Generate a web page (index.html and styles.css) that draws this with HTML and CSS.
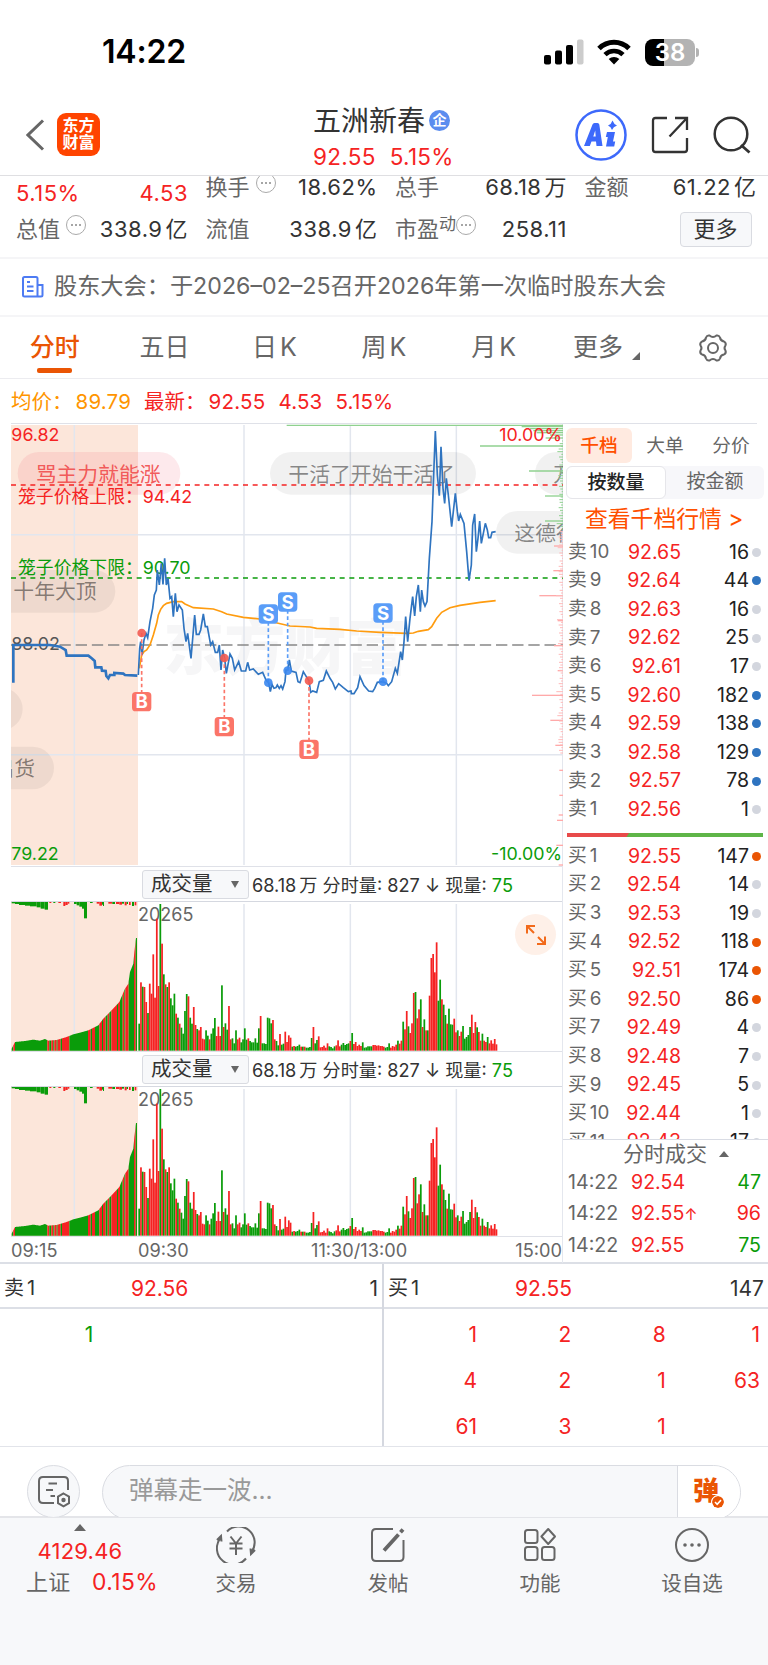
FILE: index.html
```html
<!DOCTYPE html>
<html lang="zh-CN">
<head>
    <meta charset="UTF-8">
    <meta name="viewport" content="width=device-width, initial-scale=1.0">
    <title>五洲新春 分时</title>
    <link rel="stylesheet" href="styles.css">
</head>
<body>

    <div class="status-bar">
        <span class="clock">14:22</span>
        <svg class="signal" width="40" height="26" viewBox="0 0 40 26">
            <rect x="0" y="16" width="7" height="9.500" rx="2"/>
            <rect x="11" y="11.500" width="7" height="14" rx="2"/>
            <rect x="22" y="6" width="7" height="19.500" rx="2"/>
            <rect x="33" y="0.500" width="6.500" height="25" rx="2" fill="#ccc"/>
        </svg>
        <svg class="wifi" width="36" height="26" viewBox="0 0 36 26">
            <path d="M3 9.500C11.500 1.200 24.500 1.200 33 9.500" fill="none" stroke="#000" stroke-width="5"/>
            <path d="M9 15.600C14 10.700 22 10.700 27 15.600" fill="none" stroke="#000" stroke-width="4.600"/>
            <path d="M18 25.500l-5.300-5.600c3-2.700 7.600-2.700 10.600 0z"/>
        </svg>
        <span class="battery">38</span>
        <span class="battery-tip"></span>
    </div>

    <header class="top-bar">
        <svg class="back" width="20" height="32" viewBox="0 0 20 32">
            <path d="M17 1.500L2 16l15 14.500" fill="none" stroke="#666" stroke-width="3"/>
        </svg>
        <div class="logo">东方<br>财富</div>
        <div class="title">
            <div class="name">五洲新春<span class="tag">企</span></div>
            <div class="quote"><span>92.55</span><span>5.15%</span></div>
        </div>
        <svg class="ai" width="52" height="52" viewBox="0 0 52 52">
            <circle cx="26" cy="26" r="24.500" fill="none" stroke="#3d69fb" stroke-width="2.500"/>
            <path d="M9 37L17.500 15.500Q18 14 19.500 14H22.500Q24 14 24.300 15.500L27.500 37H21.500L21 32.500H16.500L14.800 37ZM18.300 27.500H20.700L20.200 21.500Z" fill="#3d69fb" fill-rule="evenodd"/>
            <path d="M32 23h8l-2 9.500h2.200l-1 5h-8.200l1.800-9.500h-2z" fill="#3d69fb"/>
            <path d="M37.500 11.500q1.200 3.500 4.500 5q-3.800 1.200-5 4.500q-1-3.500-4-4.500q3.500-1.500 4.500-5z" fill="#3d69fb"/>
        </svg>
        <svg class="share" width="38" height="38" viewBox="0 0 38 38">
            <path d="M16 2H4.500Q2 2 2 4.500V33.500Q2 36 4.500 36H33.500Q36 36 36 33.500V22M18.500 20.500L35.500 2.500M24 2H36V14" fill="none" stroke="#333" stroke-width="2.300"/>
        </svg>
        <svg class="search" width="38" height="38" viewBox="0 0 38 38">
            <circle cx="18" cy="18" r="16.300" fill="none" stroke="#333" stroke-width="2.500"/>
            <path d="M28 29l8.500 7.500" stroke="#333" stroke-width="2.800"/>
        </svg>
    </header>

    <section class="stats">
        <div class="cell up low"><span>5.15%</span><span>4.53</span></div>
        <div class="cell"><label>换手<i class="hint"></i></label><b>18.62%</b></div>
        <div class="cell"><label>总手</label><b>68.18<s></s>万</b></div>
        <div class="cell"><label>金额</label><b>61.22<s></s>亿</b></div>
        <div class="cell"><label>总值<i class="hint"></i></label><b>338.9<s></s>亿</b></div>
        <div class="cell"><label>流值</label><b>338.9<s></s>亿</b></div>
        <div class="cell"><label>市盈<sup>动</sup><i class="hint near"></i></label><b>258.11</b></div>
        <div class="cell"><button class="more">更多</button></div>
    </section>

    <section class="notice">
        <svg width="22" height="22" viewBox="0 0 22 22" fill="none" stroke="#4d7bf3" stroke-width="2">
            <path d="M15.500 20.500H2.500Q1 20.500 1 19V2.500Q1 1 2.500 1H14Q15.500 1 15.500 2.500V20.500H19Q20.500 20.500 20.500 19V9H15.500M5 6h3M5 10.500h6.500M5 15h6.500"/>
        </svg>
        <span>股东大会：于2026–02–25召开2026年第一次临时股东大会</span>
    </section>

    <nav class="tabs">
        <a class="active">分时</a>
        <a>五日</a>
        <a>日<s></s>K</a>
        <a>周<s></s>K</a>
        <a>月<s></s>K</a>
        <a class="drop">更多</a>
        <a>
            <svg width="30" height="30" viewBox="0 0 30 30" fill="none" stroke="#666" stroke-width="2">
                <path d="M11.500 2.500Q15 5.500 18.500 2.500Q21 2 22 4.500Q22.500 8 26 8.500Q28.500 10 27.500 12.500Q25.500 15 27.500 17.500Q28.500 20 26 21.500Q22.500 22 22 25.500Q21 28 18.500 27.500Q15 24.500 11.500 27.500Q9 28 8 25.500Q7.500 22 4 21.500Q1.500 20 2.500 17.500Q4.500 15 2.500 12.500Q1.500 10 4 8.500Q7.500 8 8 4.500Q9 2 11.500 2.500Z"/>
                <circle cx="15" cy="15" r="5"/>
            </svg>
        </a>
    </nav>

    <div class="summary">
        <span class="avg">均价：</span><span class="avg num">89.79</span>
        <span class="up">最新：</span><span class="up num">92.55</span><span class="up num">4.53</span><span class="up num">5.15%</span>
    </div>

    <main class="board">
        <div class="charts">
            <svg class="price" width="552" height="442" viewBox="33 27 1656 1326">
                <rect x="33" y="30" width="381" height="1320" fill="#fce6da"/>
                <g class="mark"><text x="490" y="765">东方财富</text></g>
                <path class="grid" d="M223 30V1350M732 30V1350M1051 30V1350M1369 30V1350M33 359H1689M33 1019H1689"/>

                <g class="bubbles">
                    <rect x="53" y="111" width="488" height="128" rx="64" fill="#f04864" fill-opacity=".12"/>
                    <rect x="810" y="111" width="618" height="128" rx="64"/>
                    <rect x="1605" y="111" width="300" height="128" rx="64"/>
                    <rect x="1488" y="288" width="300" height="128" rx="64"/>
                    <rect x="-100" y="465" width="446" height="128" rx="64"/>
                    <rect x="-100" y="818" width="168" height="128" rx="64"/>
                    <rect x="-100" y="995" width="262" height="128" rx="64"/>
                    <text x="107" y="200" fill="#f04a4a">骂主力就能涨</text>
                    <text x="865" y="200">干活了开始干活了</text>
                    <text x="1660" y="200">万</text>
                    <text x="1543" y="377">这德行</text>
                    <text x="40" y="553">十年大顶</text>
                    <text x="-20" y="1083">出货</text>
                </g>

                <path d="M33 210H1689" stroke="#f52323" stroke-width="5" stroke-dasharray="15 14"/>
                <path d="M33 489H1689" stroke="#0a9c0a" stroke-width="5" stroke-dasharray="15 14"/>
                <path d="M33 690H1689" stroke="#888" stroke-width="4.500" stroke-dasharray="34 14.500"/>

                <g id="depth"></g>

                <g class="labels">
                    <text x="34" y="78" class="red">96.82</text>
                    <text x="54" y="264" class="red">笼子价格上限：<tspan x="428">94.42</tspan></text>
                    <text x="54" y="478" class="green">笼子价格下限：<tspan x="428">90.70</tspan></text>
                    <text x="34" y="706" fill="#555">88.02</text>
                    <text x="34" y="1335" class="green">79.22</text>
                    <text x="1686" y="78" class="red" text-anchor="end">10.00%</text>
                    <text x="1686" y="1335" class="green" text-anchor="end">-10.00%</text>
                </g>

                <polyline class="avg-line" points="418,760 425,720 432,710 440,705 450,690 460,660 470,625 475,600 482,583 490,572 500,565 520,560 545,560 555,567 580,578 640,582 665,590 680,597 730,607 780,612 870,633 930,636 950,640 1020,643 1070,648 1140,652 1220,655 1240,654 1255,649 1285,644 1295,635 1310,610 1325,592 1350,578 1380,571 1440,562 1487,557"/>
                <polyline class="pre-line" points="40,803 40,690 150,690 180,695 197,705 200,722 265,722 275,730 284,738 286,757 304,757 306,767 317,768 319,783 325,790 330,780 343,780 343,774 370,776 375,780 412,782"/>
                <polyline class="price-line" points="415,780 419,700 422,680 426,720 432,675 438,655 443,668 450,620 458,580 463,540 469,525 472,465 478,510 484,445 489,508 494,430 499,510 504,490 510,550 515,545 520,605 526,535 531,590 537,570 547,585 552,640 558,680 563,655 573,730 584,600 589,658 597,658 602,645 610,597 616,635 622,635 632,690 638,680 646,712 653,712 658,690 663,765 668,705 674,730 679,775 690,717 697,730 704,765 716,740 724,768 737,768 743,742 749,765 760,762 775,778 788,772 798,795 806,803 811,830 816,808 822,820 828,818 832,810 838,820 843,812 848,822 855,800 858,765 863,765 868,735 874,768 888,772 894,800 900,803 910,770 922,790 927,797 932,832 938,828 950,832 958,800 970,796 979,768 990,790 998,802 1006,822 1016,806 1030,818 1045,830 1053,828 1054,836 1062,836 1073,818 1080,785 1092,812 1106,828 1118,830 1124,820 1132,802 1149,800 1160,805 1165,812 1175,800 1186,760 1192,775 1202,710 1207,735 1212,680 1217,605 1223,680 1230,610 1238,545 1244,603 1249,545 1255,510 1261,590 1265,525 1270,560 1275,573 1281,560 1288,430 1296,320 1301,180 1306,48 1312,180 1318,242 1323,95 1329,220 1334,265 1339,190 1345,240 1355,335 1366,235 1372,290 1376,318 1381,298 1392,325 1400,410 1407,497 1414,450 1418,330 1424,297 1429,410 1434,370 1439,318 1444,385 1450,355 1456,325 1462,345 1466,368 1472,368 1476,352 1487,350"/>

                <g id="trades"></g>
            </svg>

            <div class="vol-head">
                <span class="select">成交量</span>
                <span class="vol-info">68.18<s></s>万 分时量: 827 ↓ 现量: <em>75</em></span>
            </div>
            <svg class="volume" width="552" height="149" viewBox="33 125 1656 447"></svg>

            <div class="vol-head">
                <span class="select">成交量</span>
                <span class="vol-info">68.18<s></s>万 分时量: 827 ↓ 现量: <em>75</em></span>
            </div>
            <svg class="volume" width="552" height="149" viewBox="33 125 1656 447"></svg>

            <div class="axis">
                <span>09:15</span><span>09:30</span><span>11:30/13:00</span><span>15:00</span>
            </div>

            <div class="expand">
                <svg width="22" height="22" viewBox="0 0 22 22" fill="none" stroke="#f26a1b" stroke-width="2">
                    <path d="M2 9.500V2h8M2 2l7 7M20 12.500V20h-8M20 20l-7-7"/>
                </svg>
            </div>
        </div>

        <aside class="side">
            <div class="side-tabs"><span class="on">千档</span><span>大单</span><span>分价</span></div>
            <div class="segment"><span class="on">按数量</span><span>按金额</span></div>
            <div class="link">查看千档行情 &gt;</div>
            <div class="book" id="sell"></div>
            <div class="ratio"><span></span></div>
            <div class="book buy" id="buy"></div>
            <div class="deal-title">分时成交<i></i></div>
            <div class="deals">
                <div><span>14:22</span><span class="p">92.54</span><span class="green">47</span></div>
                <div><span>14:22</span><span class="p">92.55<small>↑</small></span><span class="red">96</span></div>
                <div><span>14:22</span><span class="p">92.55</span><span class="green">75</span></div>
            </div>
        </aside>
    </main>

    <section class="queue">
        <div class="half">
            <div class="queue-head"><span>卖<s></s>1</span><span class="up">92.56</span><span>1</span></div>
            <div class="queue-grid sell"><span>1</span></div>
        </div>
        <div class="half">
            <div class="queue-head"><span>买<s></s>1</span><span class="up">92.55</span><span>147</span></div>
            <div class="queue-grid">
                <span>1</span><span>2</span><span>8</span><span>1</span>
                <span>4</span><span>2</span><span>1</span><span>63</span>
                <span>61</span><span>3</span><span>1</span>
            </div>
        </div>
    </section>

    <div class="comment">
        <div class="round">
            <svg width="36" height="34" viewBox="0 0 36 34" fill="none" stroke="#666" stroke-width="2">
                <path d="M17 28H6Q2 28 2 24V6Q2 2 6 2H27Q31 2 31 6V15M11.500 8.500H20M9 15H16M13.500 21H18"/>
                <path d="M26.500 18.500l5.500 3.200v6.500l-5.500 3.200l-5.500-3.200v-6.500z"/>
                <circle cx="26.500" cy="25" r="1.200" fill="#666"/>
            </svg>
        </div>
        <div class="input">
            <span class="placeholder">弹幕走一波...</span>
            <span class="danmu">弹<svg width="14" height="14" viewBox="0 0 14 14"><circle cx="7" cy="7" r="7" fill="#ea5504"/><path d="M3.500 7l2.500 2.700L10.500 4.800" fill="none" stroke="#fff" stroke-width="1.800"/></svg></span>
        </div>
    </div>

    <footer class="bottom-nav">
        <div class="index">
            <i></i>
            <div class="up">4129.46</div>
            <div><span>上证</span><span class="up">0.15%</span></div>
        </div>
        <div class="item">
            <svg width="40" height="36" viewBox="0 0 40 36" fill="none" stroke="#666" stroke-width="2">
                <path d="M11 4.500A16 16 0 0 1 35.500 25M39 23L35 27L34.500 21.500M30 31.500A16 16 0 0 1 4.500 11M1 13L5 9L5.500 14.500M14.500 9.500l5.500 7l5.500-7M13.500 16.500h13M13.500 21.500h13M20 16.500V28"/>
            </svg>
            <span>交易</span>
        </div>
        <div class="item">
            <svg width="36" height="36" viewBox="0 0 36 36" fill="none" stroke="#666" stroke-width="2">
                <path d="M23 2H6Q2 2 2 6V30Q2 34 6 34H29.500Q33.500 34 33.500 30V13"/>
                <path d="M14 23.500L28.500 7.500M30.500 5.300L33 2.500" stroke-width="3.800"/>
            </svg>
            <span>发帖</span>
        </div>
        <div class="item">
            <svg width="36" height="36" viewBox="0 0 36 36" fill="none" stroke="#666" stroke-width="2">
                <rect x="3" y="3" width="12.500" height="13" rx="2.500"/>
                <rect x="3" y="20" width="12.500" height="13" rx="2.500"/>
                <rect x="20" y="20" width="12.500" height="13" rx="2.500"/>
                <path d="M26.200 2L33 9.500L26.200 17L19.400 9.500Z" stroke-linejoin="round"/>
            </svg>
            <span>功能</span>
        </div>
        <div class="item">
            <svg width="36" height="36" viewBox="0 0 36 36">
                <circle cx="18" cy="18" r="16" fill="none" stroke="#666" stroke-width="2"/>
                <circle cx="11" cy="18" r="1.800" fill="#666"/><circle cx="18" cy="18" r="1.800" fill="#666"/><circle cx="25" cy="18" r="1.800" fill="#666"/>
            </svg>
            <span>设自选</span>
        </div>
    </footer>

    <script src="script.js"></script>
</body>
</html>
```

FILE: styles.css
```css
* {
    margin: 0;
    padding: 0;
    box-sizing: border-box;
}

body {
    width: 768px;
    height: 1665px;
    overflow: hidden;
    background: #fff;
    color: #333;
    font-family: "Inter", "Noto Sans CJK SC", sans-serif;
    font-size: 20px;
    line-height: 1;
}

/* thin gap between digits and a chinese unit */
s {
    display: inline-block;
    width: 3px;
}

i, em {
    font-style: normal;
}

.up, .red {
    color: #f52323;
    fill: #f52323;
}

.green {
    color: #0a9c0a;
    fill: #0a9c0a;
}

/* status bar */
.status-bar {
    display: flex;
    align-items: center;
    height: 88px;
    padding: 16px 69px 0 102px;
}

.clock {
    margin-right: auto;
    color: #000;
    font-size: 32px;
    font-weight: 600;
    letter-spacing: -0.2px;
}

.wifi {
    margin: 0 13px 0 12px;
}

.battery {
    width: 50px;
    height: 27px;
    border-radius: 8px;
    background: linear-gradient(90deg, #000 38%, #b3b3b3 38%);
    color: #fff;
    font-size: 24px;
    font-weight: 600;
    line-height: 27px;
    text-align: center;
}

.battery-tip {
    width: 3px;
    height: 9px;
    margin-left: 1px;
    border-radius: 0 4px 4px 0;
    background: #b3b3b3;
}

/* header */
.top-bar {
    display: flex;
    align-items: center;
    height: 88px;
    padding: 6px 17px 0 26px;
    border-bottom: 1px solid #dfdfe2;
}

.logo {
    width: 43px;
    height: 43px;
    margin-left: 11px;
    padding-top: 4px;
    border-radius: 9px;
    background: #ff4400;
    color: #fff;
    font-size: 16px;
    font-weight: 700;
    line-height: 17px;
    text-align: center;
}

.title {
    width: 140px;
    margin: 3px auto 0 213px;
}

.name {
    display: flex;
    align-items: center;
    height: 34px;
    font-size: 28px;
    white-space: nowrap;
}

.tag {
    width: 21px;
    height: 21px;
    margin-left: 4px;
    border-radius: 50%;
    background: #5b8def;
    color: #fff;
    font-size: 14px;
    font-weight: 700;
    line-height: 20px;
    text-align: center;
}

.quote {
    display: flex;
    gap: 14px;
    padding-top: 8px;
    color: #f52323;
    font-size: 22.500px;
    letter-spacing: 0.3px;
}

.ai {
    margin-right: 24px;
}

.share {
    margin-right: 24px;
}

/* stats */
.stats {
    display: grid;
    grid-template-columns: repeat(4, 172px);
    grid-template-rows: 42px 42px;
    column-gap: 17.500px;
    height: 84px;
    padding: 0 0 0 16px;
    margin-top: -1px;
    border-bottom: 2px solid #f5f5f7;
    border-top: 1px solid #dfdfe2;
    overflow: hidden;
    font-size: 22px;
}

.cell {
    display: flex;
    align-items: center;
    justify-content: space-between;
    height: 22px;
    white-space: nowrap;
}

.cell.low {
    padding-top: 11px;
    letter-spacing: 0.5px;
}

.cell label {
    display: flex;
    align-items: center;
    color: #666;
}

.cell b {
    font-weight: 400;
    letter-spacing: 0.5px;
}

.hint {
    display: flex;
    align-items: center;
    justify-content: center;
    width: 20px;
    height: 20px;
    margin: -9px 0 0 6px;
    border: 1.500px solid #aaa;
    border-radius: 50%;
}

.hint::after {
    content: "";
    width: 2px;
    height: 2px;
    border-radius: 50%;
    background: #888;
    box-shadow: -4px 0 #888, 4px 0 #888;
}

.hint.near {
    margin-left: 0;
}

.cell sup {
    margin-top: -9px;
    font-size: 17px;
}

.cell:nth-child(n+5) {
    align-self: start;
}

.more {
    width: 72px;
    height: 35px;
    margin: 0 0 0 auto;
    border: 1px solid #d9dbe1;
    border-radius: 4px;
    background: #f7f8fa;
    color: #333;
    font-family: inherit;
    font-size: 22px;
    line-height: 32px;
}

.cell:last-child {
    width: 167px;
    padding-top: 0;
}

/* notice */
.notice {
    display: flex;
    align-items: center;
    gap: 10px;
    height: 58px;
    padding-left: 22px;
    border-bottom: 2px solid #f5f5f7;
    color: #666;
    font-size: 23.200px;
    white-space: nowrap;
}

/* tabs */
.tabs {
    display: grid;
    grid-template-columns: repeat(7, 1fr);
    height: 62px;
    border-bottom: 1px solid #ececf0;
    color: #666;
    font-size: 25px;
}

.tabs a {
    display: flex;
    position: relative;
    align-items: center;
    justify-content: center;
}

.tabs .active {
    color: #ea5504;
    font-weight: 500;
}

.tabs .active::after {
    content: "";
    position: absolute;
    bottom: 5px;
    width: 35px;
    height: 5px;
    border-radius: 2px;
    background: #ea5504;
}

.tabs .drop {
    padding-right: 11px;
}

.tabs .drop::after {
    content: "";
    position: absolute;
    right: 18px;
    bottom: 18px;
    border-left: 8px solid transparent;
    border-bottom: 8px solid #666;
}

.summary {
    display: flex;
    align-items: center;
    height: 44px;
    padding-left: 11px;
    padding-top: 2px;
    font-size: 20.500px;
}

.summary .num {
    margin: 0 13px 0 3px;
    font-size: 20.500px;
    letter-spacing: 0.2px;
}

.summary .num + .num {
    margin-left: 0;
}

.avg {
    color: #ff9500;
}

/* main board */
.board {
    display: grid;
    grid-template-columns: 552px 205px;
    height: 841px;
    padding-left: 11px;
    border-bottom: 2px solid #dcdfe6;
}

.charts {
    position: relative;
    border-top: 1px solid #dfe1e8;
    border-right: 1px solid #e4e7ee;
}

.charts svg {
    display: block;
}

.grid {
    fill: none;
    stroke: #e2e6ee;
    stroke-width: 4.500px;
}

.mark {
    fill: #f6f6f7;
    font-size: 183px;
    font-weight: 900;
}

.bubbles {
    fill: #000;
    font-size: 62.500px;
}

.bubbles rect {
    fill-opacity: 0.055;
}

.bubbles rect:first-child {
    fill-opacity: 0.12;
}

.bubbles text {
    fill-opacity: 0.45;
}

.bubbles text:first-of-type {
    fill-opacity: 0.9;
}

.labels {
    font-size: 53.500px;
}

.avg-line, .pre-line, .price-line {
    fill: none;
    stroke: #ff9c0f;
    stroke-width: 5px;
}

.price-line {
    stroke: #2f74c0;
    stroke-width: 5px;
}

.pre-line {
    stroke: #2f74c0;
    stroke-width: 8px;
}

.trade-text {
    fill: #fff;
    font-size: 56px;
    font-weight: 700;
    text-anchor: middle;
}

.vol-head {
    display: flex;
    align-items: center;
    height: 36px;
    padding-left: 131px;
    border-top: 1px solid #dfe1e8;
    border-bottom: 1px solid #d5d8e0;
    font-size: 18.150px;
    white-space: nowrap;
}

.select {
    display: flex;
    align-items: center;
    justify-content: space-between;
    width: 107px;
    height: 29px;
    margin-right: 3px;
    padding: 1px 9px 0 8px;
    border: 1px solid #d9dbe1;
    border-radius: 3px;
    background: #f7f8fa;
    font-size: 20.500px;
}

.select::after {
    content: "";
    border: 4.500px solid transparent;
    border-top: 7px solid #666;
    border-bottom: 0;
}

.vol-info {
    padding-top: 2px;
}

.vol-info em {
    color: #0a9c0a;
}

.volume-label {
    fill: #666;
    font-size: 54px;
}

.axis {
    display: grid;
    grid-template-columns: 127px 173px 1fr auto;
    align-items: center;
    height: 27px;
    border-top: 1px solid #dfe1e8;
    color: #666;
    font-size: 18.200px;
}

.expand {
    display: flex;
    position: absolute;
    top: 490px;
    right: 6px;
    align-items: center;
    justify-content: center;
    width: 41px;
    height: 41px;
    border-radius: 50%;
    background: #fef0e8;
}

/* right column */
.side {
    display: flex;
    flex-direction: column;
    min-width: 0;
}

.side-tabs {
    display: flex;
    width: 194px;
    height: 43px;
    padding: 4px 0 3px 3px;
    border-top: 1px solid #dfe1e8;
    color: #666;
    font-size: 18.700px;
}

.side-tabs span {
    flex: 0 0 66px;
    border-radius: 6px;
    line-height: 36px;
    text-align: center;
}

.side-tabs .on {
    background: #ffeae0;
    color: #ff5000;
    font-weight: 500;
}

.segment {
    display: flex;
    width: 198px;
    height: 33px;
    margin-left: 3px;
    border-radius: 6px;
    background: #f7f7fa;
    color: #666;
    font-size: 19px;
    line-height: 32px;
    text-align: center;
}

.segment span {
    flex: 1;
}

.segment .on {
    border: 1px solid #e6e6ea;
    border-radius: 6px;
    background: #fff;
    color: #222;
    font-weight: 500;
}

.link {
    height: 39px;
    padding-left: 22px;
    color: #ff5000;
    font-size: 22.800px;
    line-height: 40px;
    white-space: nowrap;
}

.book {
    flex: 0 0 295px;
}

.book.buy {
    flex-basis: 297px;
    overflow: hidden;
}

.book .row {
    display: grid;
    grid-template-columns: 56px 57px 1fr 9px;
    align-items: center;
    height: 28.600px;
    padding: 0 7px 0 5px;
    color: #666;
    font-size: 19.500px;
}

.book .row span:first-child {
    font-size: 18.800px;
}

.book .row span:nth-child(2) {
    color: #f52323;
    text-align: right;
}

.book .row span:nth-child(3) {
    padding-right: 3px;
    color: #222;
    text-align: right;
}

.dot {
    width: 9px;
    height: 9px;
    border-radius: 50%;
    background: #d3d6de;
}

.dot.blue {
    background: #2f74c0;
}

.dot.orange {
    background: #ea5504;
}

.ratio {
    height: 4px;
    margin: 0 5px 5px 4px;
    background: #5fb548;
}

.ratio span {
    display: block;
    width: 62px;
    height: 4px;
    background: #e84a4a;
    clip-path: polygon(0 0, 100% 0, 96% 100%, 0 100%);
}

.deal-title {
    display: flex;
    align-items: center;
    gap: 12px;
    height: 28px;
    padding-left: 60px;
    border-top: 1px solid #d9dce4;
    color: #666;
    font-size: 21px;
}

.deal-title i {
    border: 5px solid transparent;
    border-bottom: 6px solid #666;
    border-top: 0;
}

.deals div {
    display: grid;
    grid-template-columns: 63px 1fr auto;
    align-items: center;
    height: 31.500px;
    padding: 0 7px 0 5px;
    color: #666;
    font-size: 19.600px;
}

.deals .p {
    color: #f52323;
}

.deals small {
    font-size: 16px;
}

/* order queue */
.queue {
    display: flex;
    height: 183px;
    border-bottom: 1px solid #e2e4ea;
}

.half {
    width: 384px;
}

.half:first-child {
    border-right: 2px solid #d5d8e0;
}

.queue-head {
    display: grid;
    grid-template-columns: 127px 1fr auto;
    align-items: center;
    height: 45px;
    padding: 5px 4px 0;
    border-bottom: 2px solid #dcdfe6;
    font-size: 21px;
}

.queue-head span:first-child {
    font-size: 20px;
}

.queue-grid {
    display: grid;
    grid-template-columns: repeat(4, 94.300px);
    grid-auto-rows: 46.300px;
    align-items: center;
    justify-content: end;
    padding: 2px 8px 0 0;
    color: #f52323;
    font-size: 21px;
    text-align: right;
}

.queue-grid.sell {
    justify-content: start;
    margin-left: -1px;
    color: #0a9c0a;
}

/* comment bar */
.comment {
    display: flex;
    gap: 22px;
    height: 70px;
    padding: 18px 27px 0;
    overflow: hidden;
}

.round {
    display: flex;
    flex: 0 0 53px;
    align-items: center;
    justify-content: center;
    height: 53px;
    padding-left: 2px;
    border: 1px solid #dadce2;
    border-radius: 50%;
    background: #f7f8fa;
}

.input {
    display: flex;
    flex: 1;
    height: 55px;
    border: 1px solid #dadce2;
    border-radius: 28px;
    background: #f7f8fa;
    overflow: hidden;
}

.placeholder {
    flex: 1;
    padding-left: 26px;
    color: #999;
    font-size: 24.500px;
    line-height: 49px;
}

.danmu {
    display: flex;
    width: 63px;
    padding: 12px 0 0 15px;
    border-left: 1px solid #dadce2;
    background: #fff;
    color: #ea5504;
    font-size: 26px;
    font-weight: 900;
}

.danmu svg {
    flex: none;
    margin: 17px 0 0 -8px;
    border: 1px solid #fff;
    border-radius: 50%;
    background: #fff;
}

/* bottom nav */
.bottom-nav {
    display: grid;
    grid-template-columns: 160px repeat(4, 152px);
    height: 149px;
    margin-top: -1px;
    border-top: 2px solid #e4e5e9;
    background: #f7f8fa;
    color: #666;
}

.index {
    padding-top: 6px;
    font-size: 22px;
    text-align: center;
    letter-spacing: 0.2px;
}

.index i {
    display: block;
    width: 0;
    margin: 0 auto 9px;
    border: 6px solid transparent;
    border-top: 0;
    border-bottom: 7px solid #666;
}

.index div:last-child {
    display: flex;
    justify-content: space-between;
    padding: 9px 2px 0 26px;
}

.index div:last-child .up {
    font-size: 22.800px;
    letter-spacing: 0.4px;
}

.item {
    display: flex;
    flex-direction: column;
    align-items: center;
    gap: 11px;
    padding-top: 9px;
    font-size: 20.500px;
}
```

FILE: script.js
```js
const NS = "http://www.w3.org/2000/svg";
const RED = "#f52323";
const GREEN = "#0a9c0a";

function add(parent, name, attrs, text) {
    const el = document.createElementNS(NS, name);
    for (const key in attrs) el.setAttribute(key, attrs[key]);
    if (text) el.textContent = text;
    parent.appendChild(el);
}

// Volume per minute: colour + top of the bar, base line is 571
const minutes = ("g490 r366 g379 r380 r425 g458 r370 r400 r282 r412 r175 r377 g131 r250 g342 r372 g380 r366 g414 g435 " +
    "g400 r460 g472 r490 g502 g520 g452 g401 r408 g472 g490 r440 r494 g506 r510 r500 r535 r537 g510 g526 " +
    "r537 g520 g504 g473 r527 r499 r527 g375 r500 g489 g508 r437 r537 g534 g549 g510 r537 r532 g546 g537 " +
    "g504 g538 r534 g542 g546 g546 g534 g547 g504 r467 g549 g549 g551 g472 g474 g489 r479 r537 g542 g555 " +
    "r521 g553 g550 r514 r545 r525 r532 g559 r557 g559 g557 g553 r559 g559 r559 g562 g562 g560 g533 r500 " +
    "g549 g539 r528 r561 r560 r556 r562 r549 g558 g560 g564 g558 r555 r540 r558 g553 g548 g554 g551 g549 " +
    "r542 g518 r551 r545 r557 r553 r557 g546 g562 g561 g558 g558 g558 r554 r554 r556 r555 r557 r557 r559 " +
    "g562 g560 g549 r562 r557 r559 r553 g541 r550 r541 g484 r507 r452 g498 r518 r489 r398 g395 r474 r447 " +
    "g417 r500 g477 r510 g510 r406 r293 r281 r336 r246 g421 g358 r417 g433 g464 r490 g445 g492 g493 r475 " +
    "r516 g510 r527 r514 g497 g535 g530 g524 g500 r463 r518 r485 g501 r515 r541 g520 r541 r545 g530 r549 " +
    "r540 r550 r536 r552").split(" ");

// Call auction: outline of the bars and the colour runs under it
const outline = [[35, 565], [45, 545], [75, 542], [100, 538], [120, 541], [135, 536], [145, 541], [170, 539], [200, 530],
    [220, 522], [240, 517], [265, 510], [295, 495], [310, 475], [330, 455], [358, 425], [375, 385], [385, 370],
    [390, 335], [400, 310], [403, 275], [408, 233], [413, 233]];
const runs = [[35, "g"], [40, "r"], [45, "g"], [142, "r"], [148, "g"], [154, "r"], [160, "g"], [163, "r"], [170, "g"],
    [173, "r"], [182, "g"], [186, "r"], [208, "g"], [264, "r"], [272, "g"], [276, "r"], [285, "g"], [298, "r"],
    [306, "g"], [309, "r"], [317, "g"], [323, "r"], [328, "g"], [334, "r"], [351, "g"], [354, "r"], [360, "g"],
    [368, "r"], [373, "g"], [376, "r"], [386, "g"], [402, "r"], [407, "g"]];
// Unmatched volume hanging from the top: x, width, height, colour
const hanging = [[35, 10, 4, "g"], [45, 12, 6, "g"], [57, 18, 9, "g"], [75, 15, 11, "g"], [90, 20, 13, "g"],
    [110, 12, 16, "g"], [122, 12, 20, "g"], [134, 10, 23, "g"], [148, 6, 3, "r"], [160, 6, 3, "g"], [175, 8, 3, "r"],
    [190, 6, 12, "r"], [196, 7, 9, "r"], [203, 5, 5, "r"], [222, 8, 6, "g"], [230, 8, 10, "g"], [238, 8, 14, "g"],
    [246, 6, 20, "g"], [252, 9, 49, "g"], [270, 8, 3, "g"], [290, 8, 5, "r"], [298, 8, 11, "r"], [306, 5, 8, "g"],
    [309, 3, 12, "g"], [325, 12, 5, "r"], [337, 8, 6, "g"], [348, 10, 6, "r"], [358, 8, 8, "r"], [366, 6, 5, "g"],
    [374, 6, 10, "r"], [380, 4, 6, "g"], [387, 5, 9, "r"], [396, 6, 12, "g"], [404, 5, 10, "r"]];

function colour(c) {
    return c === "r" ? RED : GREEN;
}

function outlineTop(x) {
    let i = 1;
    while (i < outline.length - 1 && outline[i][0] < x) i++;
    const [x0, y0] = outline[i - 1];
    const [x1, y1] = outline[i];
    return y0 + (y1 - y0) * (x - x0) / (x1 - x0);
}

document.querySelectorAll(".volume").forEach(svg => {
    add(svg, "rect", { x: 33, y: 125, width: 381, height: 447, fill: "#fce6da" });
    add(svg, "path", { d: "M223 131V572M732 131V572M1051 131V572M1369 131V572", class: "grid" });
    add(svg, "text", { x: 414, y: 183, class: "volume-label" }, "20265");

    runs.forEach(([start, c], i) => {
        const end = i + 1 < runs.length ? runs[i + 1][0] : 411;
        let d = `M${start} 571`;
        for (let x = start; x <= end; x++) d += `L${x} ${outlineTop(x).toFixed(1)}`;
        add(svg, "path", { d: `${d}L${end} 571Z`, fill: colour(c) });
    });
    hanging.forEach(([x, width, height, c]) => add(svg, "rect", { x, y: 125, width, height, fill: colour(c) }));
    minutes.forEach((m, i) => {
        const top = Number(m.slice(1));
        add(svg, "rect", { x: (415 + i * 5.28).toFixed(1), y: top, width: 5.2, height: 571 - top, fill: colour(m[0]) });
    });
});

// Order depth on the right edge of the price chart: y, left end
const depth = document.getElementById("depth");
[[31, 860], [35, 1565], [41, 1590], [47, 1600], [53, 1610], [60, 1650], [69, 1637], [93, 1440], [168, 1587], [243, 1635],
    [318, 1635], [393, 1662], [467, 1660], [542, 1618], [617, 1673], [692, 1662], [767, 1673], [841, 1596], [916, 1651],
    [991, 1666], [1066, 1678], [1141, 1678], [1200, 1676], [1216, 1671], [1291, 1669], [1350, 1676]].forEach(([y, x]) => {
    add(depth, "path", { d: `M${x} ${y}H1689`, stroke: y < 350 ? "#8fd18f" : "#ffa9a9", "stroke-width": 4 });
});
for (let i = 0; i < 118; i++) {
    const y = 78 + i * 8;
    const w = 3 + (i * 7 % 11) + (i % 9 === 4 ? 8 : 0);
    add(depth, "path", { d: `M${1689 - w} ${y}H1689`, stroke: y < 350 ? "#8fd18f" : "#ffb9b9", "stroke-width": 3 });
}

// Own trades: letter, x, y of the dot, y of the badge
const trades = document.getElementById("trades");
[["B", 425, 654, 860], ["B", 673, 729, 935], ["S", 805, 803, 597], ["S", 863, 767, 561], ["B", 927, 797, 1003],
    ["S", 1149, 800, 594]].forEach(([type, x, dot, badge]) => {
    const fill = type === "B" ? "#fb7568" : "#5a9df8";
    add(trades, "path", { d: `M${x} ${dot}V${badge}`, stroke: fill, "stroke-width": 5, "stroke-dasharray": "11 8" });
    add(trades, "circle", { cx: x, cy: dot, r: 13, fill: type === "B" ? "#f25a50" : "#3b87ee", "fill-opacity": 0.9 });
    add(trades, "rect", { x: x - 29, y: badge - 29, width: 58, height: 58, rx: 11, fill });
    add(trades, "text", { x, y: badge + 20, class: "trade-text" }, type);
});

// Order book
function rows(id, side, list, active) {
    document.getElementById(id).innerHTML = list.map(([level, price, qty]) =>
        `<div class="row"><span>${side}<s></s>${level}</span><span>${price}</span><span>${qty}</span>` +
        `<i class="dot ${qty > 40 ? active : ""}"></i></div>`).join("");
}

rows("sell", "卖", [[10, "92.65", 16], [9, "92.64", 44], [8, "92.63", 16], [7, "92.62", 25], [6, "92.61", 17],
    [5, "92.60", 182], [4, "92.59", 138], [3, "92.58", 129], [2, "92.57", 78], [1, "92.56", 1]], "blue");
rows("buy", "买", [[1, "92.55", 147], [2, "92.54", 14], [3, "92.53", 19], [4, "92.52", 118], [5, "92.51", 174],
    [6, "92.50", 86], [7, "92.49", 4], [8, "92.48", 7], [9, "92.45", 5], [10, "92.44", 1], [11, "92.43", 17]], "orange");
```
